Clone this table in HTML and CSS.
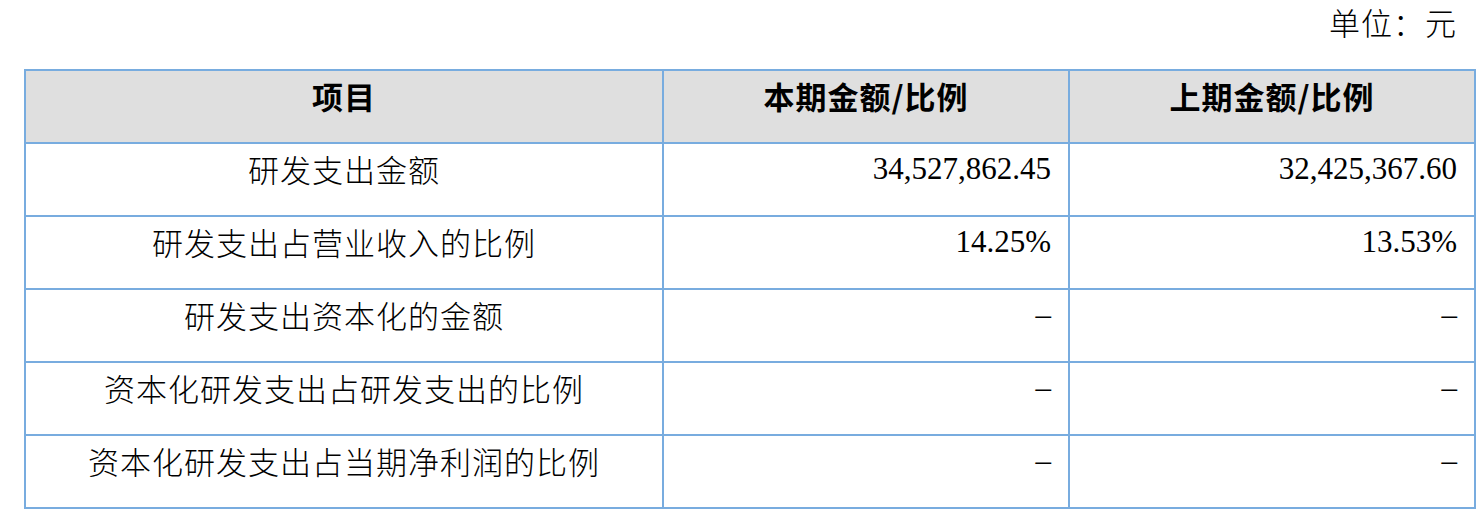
FILE: index.html
```html
<!DOCTYPE html>
<html lang="zh-CN">
<head>
<meta charset="utf-8">
<title>研发投入</title>
<link rel="stylesheet" href="styles.css">
</head>
<body>
<div class="unit">单位：元</div>
<table class="rd-table">
  <colgroup>
    <col class="col-item">
    <col class="col-num">
    <col class="col-num">
  </colgroup>
  <thead>
    <tr>
      <th>项目</th>
      <th>本期金额/比例</th>
      <th>上期金额/比例</th>
    </tr>
  </thead>
  <tbody>
    <tr>
      <td class="label">研发支出金额</td>
      <td class="num">34,527,862.45</td>
      <td class="num">32,425,367.60</td>
    </tr>
    <tr>
      <td class="label">研发支出占营业收入的比例</td>
      <td class="num">14.25%</td>
      <td class="num">13.53%</td>
    </tr>
    <tr>
      <td class="label">研发支出资本化的金额</td>
      <td class="num">–</td>
      <td class="num">–</td>
    </tr>
    <tr>
      <td class="label">资本化研发支出占研发支出的比例</td>
      <td class="num">–</td>
      <td class="num">–</td>
    </tr>
    <tr>
      <td class="label">资本化研发支出占当期净利润的比例</td>
      <td class="num">–</td>
      <td class="num">–</td>
    </tr>
  </tbody>
</table>
</body>
</html>
```
FILE: styles.css
```css
html, body {
  margin: 0;
  padding: 0;
  background: #ffffff;
  color: #000000;
}

body {
  font-family: "Liberation Serif", "Noto Sans CJK SC", serif;
}

.unit {
  padding: 2px 27px 0 0;
  height: 40px;
  line-height: 40px;
  text-align: right;
  font-family: "Noto Sans CJK SC", sans-serif;
  font-weight: 300;
  font-size: 31px;
  letter-spacing: 1px;
}

.rd-table {
  margin: 27px 0 0 24px;
  width: 1451px;
  border-collapse: collapse;
  table-layout: fixed;
}

.col-item { width: 638px; }
.col-num { width: 406px; }

.rd-table tr {
  height: 73px;
}

.rd-table th,
.rd-table td {
  border: 2px solid #78acdf;
  padding: 5px 17px 0 17px;
  vertical-align: top;
  line-height: 40px;
  box-sizing: border-box;
}

.rd-table th {
  background: #dfdfdf;
  font-family: "Noto Sans CJK SC", sans-serif;
  font-weight: 600;
  font-size: 31px;
  letter-spacing: 1px;
  text-align: center;
}

.rd-table td.label {
  text-align: center;
  font-family: "Noto Sans CJK SC", sans-serif;
  font-weight: 300;
  font-size: 31px;
  letter-spacing: 1px;
}

.rd-table td.num {
  text-align: right;
  font-family: "Liberation Serif", serif;
  font-size: 31px;
}
```
